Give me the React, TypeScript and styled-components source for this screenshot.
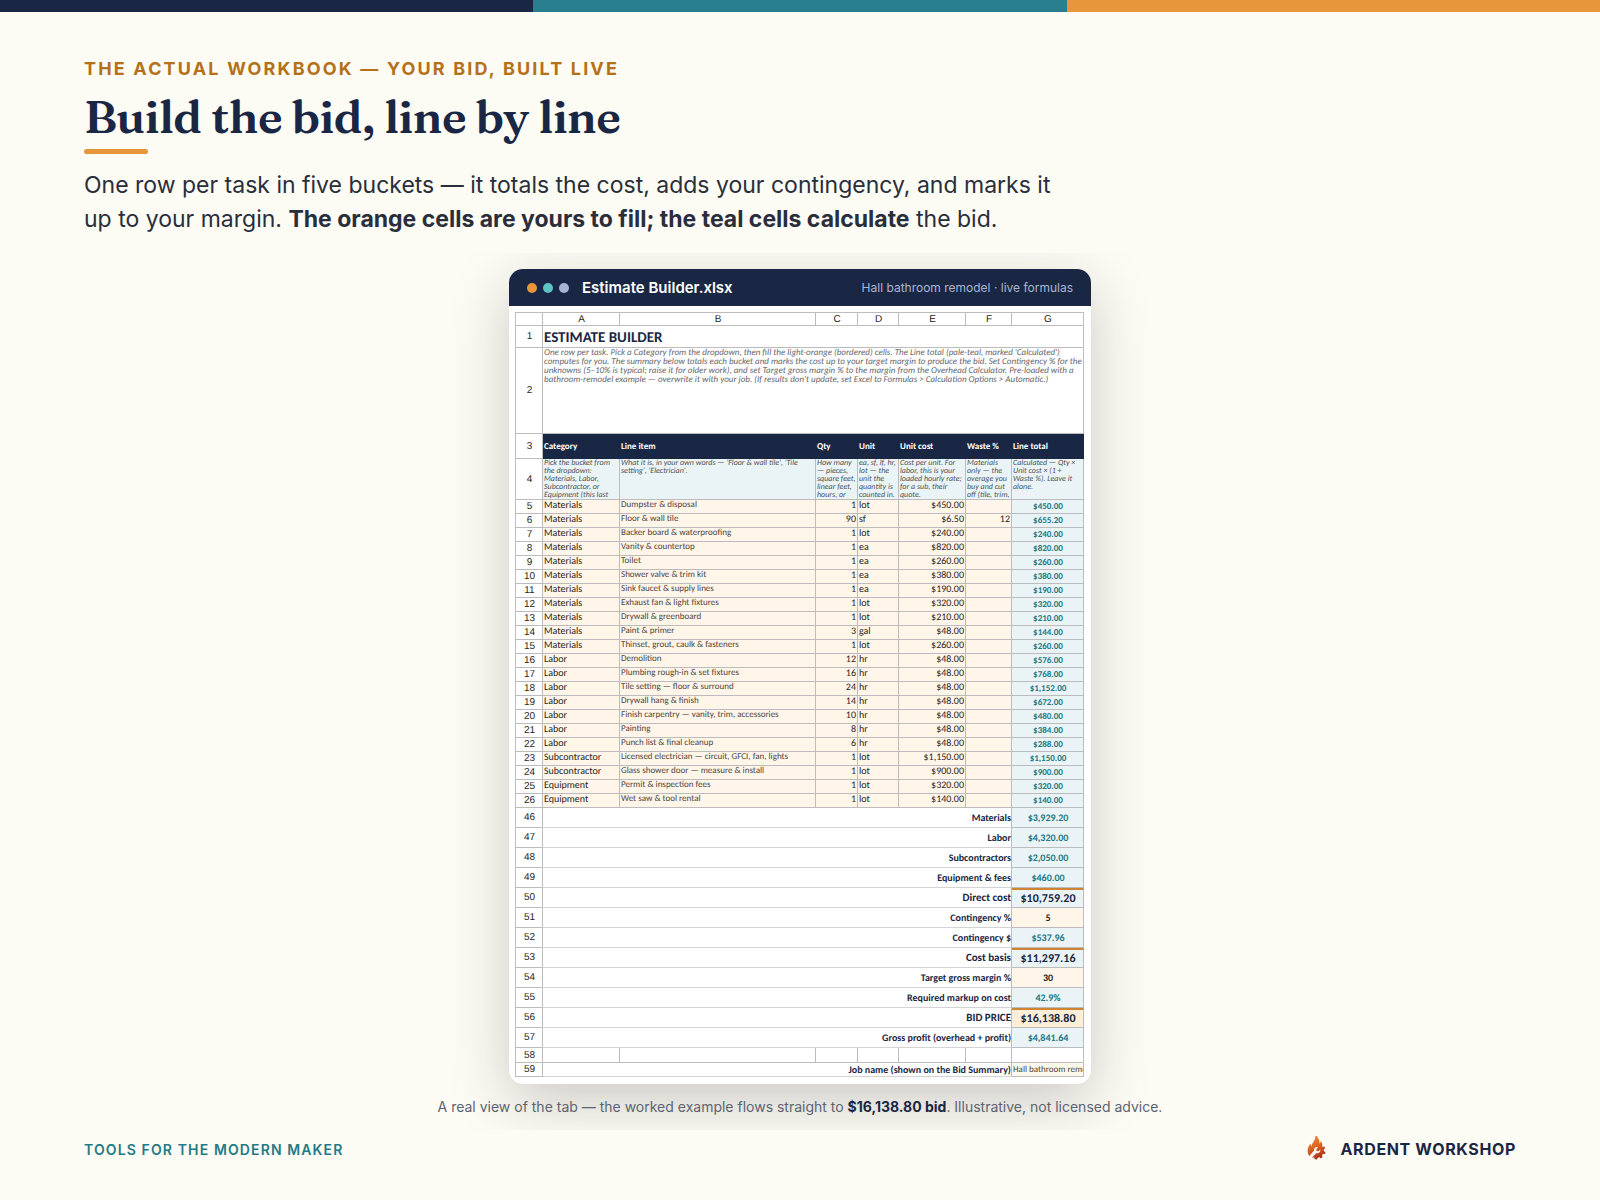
import React from "react";
import styled, { createGlobalStyle, css } from "styled-components";

const navy = "#1a2744";
const teal = "#247a86";
const sans = `Inter, "Liberation Sans", sans-serif`;
const sheet = `Carlito, Lato, sans-serif`;
const line = "#bcbbbd";

const Global = createGlobalStyle`
  *, *::before, *::after { box-sizing: border-box; }
  body { margin: 0; background: #fcfbf4; color: #2a2e3a; font-family: ${sans}; }
`;

const Page = styled.div`
  min-height: 100vh;
  display: flex;
  flex-direction: column;
`;

const Stripe = styled.div`
  height: 12px;
  display: grid;
  grid-template-columns: repeat(3, 1fr);
`;

const Band = styled.span<{ $color: string }>`
  background: ${(p) => p.$color};
`;

const Header = styled.header`
  padding: 44px 84px 0;
`;

const Eyebrow = styled.p`
  margin: 0;
  font-size: 18px;
  line-height: 26px;
  font-weight: 700;
  letter-spacing: 0.12em;
  text-transform: uppercase;
  color: #b5701a;
`;

const Title = styled.h1`
  margin: 7px 0 0;
  font-family: Fraunces, "Liberation Serif", serif;
  font-size: 46px;
  line-height: 56px;
  font-weight: 600;
  letter-spacing: -0.01em;
  color: ${navy};
`;

const Rule = styled.div`
  width: 64px;
  height: 5px;
  margin-top: 4px;
  border-radius: 3px;
  background: #e8963c;
`;

const Lead = styled.p`
  margin: 14px 0 0;
  max-width: 1000px;
  font-size: 23px;
  line-height: 34px;
`;

const Stage = styled.main`
  flex: 1;
  margin-top: 17px;
  padding-top: 16px;
  overflow: hidden;
  display: flex;
  flex-direction: column;
  align-items: center;
`;

const Window = styled.section`
  width: 100%;
  max-width: 582px;
  border-radius: 14px;
  background: #fff;
  box-shadow: 0 18px 60px rgba(26, 26, 34, 0.22);
`;

const WindowBar = styled.div`
  height: 37px;
  padding: 0 18px;
  display: flex;
  align-items: center;
  gap: 6px;
  border-radius: 14px 14px 0 0;
  background: ${navy};
`;

const Dot = styled.span<{ $color: string }>`
  width: 10px;
  height: 10px;
  border-radius: 50%;
  background: ${(p) => p.$color};
`;

const FileName = styled.h2`
  margin: 0 auto 0 7px;
  font-size: 15px;
  line-height: 20px;
  font-weight: 600;
  color: #fff;
`;

const FileNote = styled.span`
  font-size: 12px;
  line-height: 20px;
  color: #a9b6d3;
`;

const SheetWrap = styled.div`
  padding: 6px 7px 7px 6px;
`;

const Sheet = styled.table`
  width: 100%;
  table-layout: fixed;
  border-spacing: 0;
  border-top: 1px solid ${line};
  border-left: 1px solid ${line};
  font-family: ${sheet};
  text-rendering: geometricPrecision;
  color: #2b2620;
`;

const Col = styled.col<{ $w: number }>`
  width: ${(p) => p.$w}px;
`;

const Row = styled.tr<{ $h: number }>`
  height: ${(p) => p.$h}px;
`;

const cell = css`
  padding: 0 0 0 1px;
  border-right: 1px solid ${line};
  border-bottom: 1px solid ${line};
  white-space: nowrap;
`;

const Letter = styled.th`
  ${cell}
  font: 400 10px/11px "Liberation Sans", Arial, sans-serif;
  text-align: center;
`;

const RowNo = styled(Letter)``;

const SheetTitle = styled.td`
  ${cell}
  font-size: 15px;
  line-height: 18px;
  font-weight: 700;
  vertical-align: bottom;
  color: ${navy};
`;

const Intro = styled.td`
  ${cell}
  font-size: 9px;
  line-height: 9px;
  font-style: italic;
  vertical-align: top;
  color: #66676b;
`;

const Head = styled.th`
  padding: 0 0 0 1px;
  font-size: 9px;
  line-height: 10px;
  font-weight: 700;
  text-align: left;
  white-space: nowrap;
  color: #fff;
  background: ${navy};
`;

const Hint = styled.td`
  ${cell}
  font-size: 8px;
  line-height: 8px;
  font-style: italic;
  vertical-align: top;
  color: #4c5358;
  background: #eaf3f5;
`;

const Entry = styled.td<{ $right?: boolean; $small?: boolean }>`
  ${cell}
  padding-right: ${(p) => (p.$right ? 1 : 0)}px;
  font-size: ${(p) => (p.$small ? 9 : 10)}px;
  line-height: ${(p) => (p.$small ? 9 : 10)}px;
  vertical-align: top;
  text-align: ${(p) => (p.$right ? "right" : "left")};
  color: ${(p) => (p.$small ? "#4d4640" : "#2b2620")};
  background: #fff5e9;
`;

const Result = styled.td<{ $tone?: "calc" | "input" | "total" | "bid" }>`
  ${cell}
  font-size: ${(p) => (p.$tone === "total" || p.$tone === "bid" ? 12 : 10)}px;
  line-height: 12px;
  font-weight: 700;
  text-align: center;
  color: ${(p) => (p.$tone === "calc" ? teal : p.$tone === "input" ? "#2b2620" : navy)};
  background: ${(p) =>
    p.$tone === "input" ? "#fff5e9" : p.$tone === "bid" ? "#fdeed8" : "#eaf3f5"};
  ${(p) =>
    (p.$tone === "total" || p.$tone === "bid") && "border-top: 2px solid #cf8434;"}
`;

const LineTotal = styled(Result)`
  font-size: 9px;
`;

const Label = styled.td<{ $big?: boolean }>`
  ${cell}
  border-bottom-color: #d4d4d6;
  font-size: ${(p) => (p.$big ? 11 : 10)}px;
  line-height: 12px;
  font-weight: 700;
  text-align: right;
  color: ${navy};
`;

const Blank = styled.td`
  ${cell}
`;

const JobName = styled.td`
  ${cell}
  overflow: hidden;
  font-size: 9px;
  line-height: 12px;
  color: #4d4640;
  background: #fcf8ea;
`;

const Caption = styled.p`
  margin: 12px 0 0;
  padding-bottom: 12px;
  font-size: 14px;
  line-height: 22px;
  color: #5d6372;
  strong { color: ${navy}; }
`;

const Footer = styled.footer`
  padding: 0 84px;
  height: 70px;
  display: flex;
  justify-content: space-between;
  align-items: flex-start;
`;

const Tagline = styled.span`
  padding-top: 9px;
  font-size: 14px;
  line-height: 22px;
  font-weight: 600;
  letter-spacing: 0.08em;
  text-transform: uppercase;
  color: ${teal};
`;

const Brand = styled.span`
  padding-top: 5px;
  display: flex;
  align-items: center;
  gap: 12px;
  font-size: 16px;
  line-height: 28px;
  font-weight: 700;
  letter-spacing: 0.04em;
  color: ${navy};
`;

const Flame = () => (
  <svg width="26" height="26" viewBox="0 0 28 28" aria-hidden="true">
    <defs>
      <linearGradient id="ember" x1="0.3" y1="0" x2="0.6" y2="1">
        <stop offset="0" stopColor="#f08a34" />
        <stop offset="0.5" stopColor="#dd6322" />
        <stop offset="1" stopColor="#a52f1c" />
      </linearGradient>
    </defs>
    <path
      fill="url(#ember)"
      d="M14.300 2c-.4 2.500-1.500 3.800-2.600 5.200-1 1.300-1.500 2.500-1.200 4.200-.9-.8-1.300-1.900-1.100-3.400-1.900 2.200-3.400 4.700-3.400 7.800 0 2.700 1.200 4.900 3 6.500l2-2.100c-.7 1.500-.6 2.400.3 3.100l1.700-.5.8 2.200 2.300.2.900-1.900 1.900-.3 1.500 1.300 1.700-1.400-.6-2 1.100-1.500 2.100.1.600-2.100-1.800-1.200v-1.700l1.500-1.300-.9-1.900-1.800.2-.5-.5c.3-2.300-.4-4.200-1.900-5.600.1 1.300-.2 2.200-1 2.900.2-3.900-1.700-6.800-4.600-10.300z"
    />
    <path
      fill="#fcfbf4"
      d="M17.200 12.100c-2.500-.7-4.700 1.300-4.400 3.900l-4.200 4.600c-.6 1.500.9 3 2.500 2.300l4.300-4.400c2.500.6 4.700-1.300 4.400-3.900l-2.100 1.900-1.900-.4-.5-1.900z"
    />
  </svg>
);

const columns = [
  ["A", 77], ["B", 196], ["C", 42], ["D", 41], ["E", 67], ["F", 46], ["G", 72],
] as const;

const heads = ["Category", "Line item", "Qty", "Unit", "Unit cost", "Waste %", "Line total"];

const hints = [
  ["Pick the bucket from", "the dropdown:", "Materials, Labor,", "Subcontractor, or", "Equipment (this last"],
  ["What it is, in your own words — 'Floor & wall tile', 'Tile", "setting', 'Electrician'."],
  ["How many", "— pieces,", "square feet,", "linear feet,", "hours, or"],
  ["ea, sf, lf, hr,", "lot — the", "unit the", "quantity is", "counted in."],
  ["Cost per unit. For", "labor, this is your", "loaded hourly rate;", "for a sub, their", "quote."],
  ["Materials", "only — the", "overage you", "buy and cut", "off (tile, trim,"],
  ["Calculated — Qty ×", "Unit cost × (1 +", "Waste %). Leave it", "alone."],
];

const intro = [
  "One row per task. Pick a Category from the dropdown, then fill the light-orange (bordered) cells. The Line total (pale-teal, marked 'Calculated')",
  "computes for you. The summary below totals each bucket and marks the cost up to your target margin to produce the bid. Set Contingency % for the",
  "unknowns (5–10% is typical; raise it for older work), and set Target gross margin % to the margin from the Overhead Calculator. Pre-loaded with a",
  "bathroom-remodel example — overwrite it with your job. (If results don't update, set Excel to Formulas > Calculation Options > Automatic.)",
];

const items = [
  ["Materials", "Dumpster & disposal", "1", "lot", "$450.00", "", "$450.00"],
  ["Materials", "Floor & wall tile", "90", "sf", "$6.50", "12", "$655.20"],
  ["Materials", "Backer board & waterproofing", "1", "lot", "$240.00", "", "$240.00"],
  ["Materials", "Vanity & countertop", "1", "ea", "$820.00", "", "$820.00"],
  ["Materials", "Toilet", "1", "ea", "$260.00", "", "$260.00"],
  ["Materials", "Shower valve & trim kit", "1", "ea", "$380.00", "", "$380.00"],
  ["Materials", "Sink faucet & supply lines", "1", "ea", "$190.00", "", "$190.00"],
  ["Materials", "Exhaust fan & light fixtures", "1", "lot", "$320.00", "", "$320.00"],
  ["Materials", "Drywall & greenboard", "1", "lot", "$210.00", "", "$210.00"],
  ["Materials", "Paint & primer", "3", "gal", "$48.00", "", "$144.00"],
  ["Materials", "Thinset, grout, caulk & fasteners", "1", "lot", "$260.00", "", "$260.00"],
  ["Labor", "Demolition", "12", "hr", "$48.00", "", "$576.00"],
  ["Labor", "Plumbing rough-in & set fixtures", "16", "hr", "$48.00", "", "$768.00"],
  ["Labor", "Tile setting — floor & surround", "24", "hr", "$48.00", "", "$1,152.00"],
  ["Labor", "Drywall hang & finish", "14", "hr", "$48.00", "", "$672.00"],
  ["Labor", "Finish carpentry — vanity, trim, accessories", "10", "hr", "$48.00", "", "$480.00"],
  ["Labor", "Painting", "8", "hr", "$48.00", "", "$384.00"],
  ["Labor", "Punch list & final cleanup", "6", "hr", "$48.00", "", "$288.00"],
  ["Subcontractor", "Licensed electrician — circuit, GFCI, fan, lights", "1", "lot", "$1,150.00", "", "$1,150.00"],
  ["Subcontractor", "Glass shower door — measure & install", "1", "lot", "$900.00", "", "$900.00"],
  ["Equipment", "Permit & inspection fees", "1", "lot", "$320.00", "", "$320.00"],
  ["Equipment", "Wet saw & tool rental", "1", "lot", "$140.00", "", "$140.00"],
];

const summary: [string, string, "calc" | "input" | "total" | "bid"][] = [
  ["Materials", "$3,929.20", "calc"],
  ["Labor", "$4,320.00", "calc"],
  ["Subcontractors", "$2,050.00", "calc"],
  ["Equipment & fees", "$460.00", "calc"],
  ["Direct cost", "$10,759.20", "total"],
  ["Contingency %", "5", "input"],
  ["Contingency $", "$537.96", "calc"],
  ["Cost basis", "$11,297.16", "total"],
  ["Target gross margin %", "30", "input"],
  ["Required markup on cost", "42.9%", "calc"],
  ["BID PRICE", "$16,138.80", "bid"],
  ["Gross profit (overhead + profit)", "$4,841.64", "calc"],
];

const Lines = ({ of }: { of: string[] }) => (
  <>
    {of.map((text, i) => (
      <React.Fragment key={i}>
        {i > 0 && <br />}
        {text}
      </React.Fragment>
    ))}
  </>
);

const EstimateSheet = () => (
  <Sheet>
    <colgroup>
      <Col $w={27} />
      {columns.map(([name, w]) => <Col key={name} $w={w} />)}
    </colgroup>
    <thead>
      <Row $h={13}>
        <Letter as="td" />
        {columns.map(([name]) => <Letter key={name} scope="col">{name}</Letter>)}
      </Row>
    </thead>
    <tbody>
      <Row $h={22}>
        <RowNo scope="row">1</RowNo>
        <SheetTitle colSpan={7}>ESTIMATE BUILDER</SheetTitle>
      </Row>
      <Row $h={86}>
        <RowNo scope="row">2</RowNo>
        <Intro colSpan={7}><Lines of={intro} /></Intro>
      </Row>
      <Row $h={25}>
        <RowNo scope="row">3</RowNo>
        {heads.map((h) => <Head key={h} scope="col">{h}</Head>)}
      </Row>
      <Row $h={41}>
        <RowNo scope="row">4</RowNo>
        {hints.map((h) => <Hint key={h[0]}><Lines of={h} /></Hint>)}
      </Row>
      {items.map(([category, item, qty, unit, cost, waste, total], i) => (
        <Row key={item} $h={14}>
          <RowNo scope="row">{i + 5}</RowNo>
          <Entry>{category}</Entry>
          <Entry $small>{item}</Entry>
          <Entry $right>{qty}</Entry>
          <Entry>{unit}</Entry>
          <Entry $right>{cost}</Entry>
          <Entry $right>{waste}</Entry>
          <LineTotal $tone="calc">{total}</LineTotal>
        </Row>
      ))}
      {summary.map(([label, value, tone], i) => (
        <Row key={label} $h={20}>
          <RowNo scope="row">{i + 46}</RowNo>
          <Label colSpan={6} $big={tone === "total" || tone === "bid"}>{label}</Label>
          <Result $tone={tone}>{value}</Result>
        </Row>
      ))}
      <Row $h={15}>
        <RowNo scope="row">58</RowNo>
        {columns.map(([name]) => <Blank key={name} />)}
      </Row>
      <Row $h={14}>
        <RowNo scope="row">59</RowNo>
        <Label colSpan={6}>Job name (shown on the Bid Summary)</Label>
        <JobName>Hall bathroom remodel</JobName>
      </Row>
    </tbody>
  </Sheet>
);

export default function App() {
  return (
    <Page>
      <Global />
      <Stripe>
        <Band $color={navy} />
        <Band $color="#2a7f8e" />
        <Band $color="#e8963c" />
      </Stripe>
      <Header>
        <Eyebrow>The actual workbook — your bid, built live</Eyebrow>
        <Title>Build the bid, line by line</Title>
        <Rule />
        <Lead>
          One row per task in five buckets — it totals the cost, adds your contingency, and marks it
          up to your margin. <strong>The orange cells are yours to fill; the teal cells calculate</strong> the bid.
        </Lead>
      </Header>
      <Stage>
        <Window>
          <WindowBar>
            <Dot $color="#e8963c" />
            <Dot $color="#5cc4c4" />
            <Dot $color="#a9b6d3" />
            <FileName>Estimate Builder.xlsx</FileName>
            <FileNote>Hall bathroom remodel · live formulas</FileNote>
          </WindowBar>
          <SheetWrap>
            <EstimateSheet />
          </SheetWrap>
        </Window>
        <Caption>
          A real view of the tab — the worked example flows straight to <strong>$16,138.80 bid</strong>. Illustrative, not licensed advice.
        </Caption>
      </Stage>
      <Footer>
        <Tagline>Tools for the modern maker</Tagline>
        <Brand>
          <Flame />
          ARDENT WORKSHOP
        </Brand>
      </Footer>
    </Page>
  );
}
